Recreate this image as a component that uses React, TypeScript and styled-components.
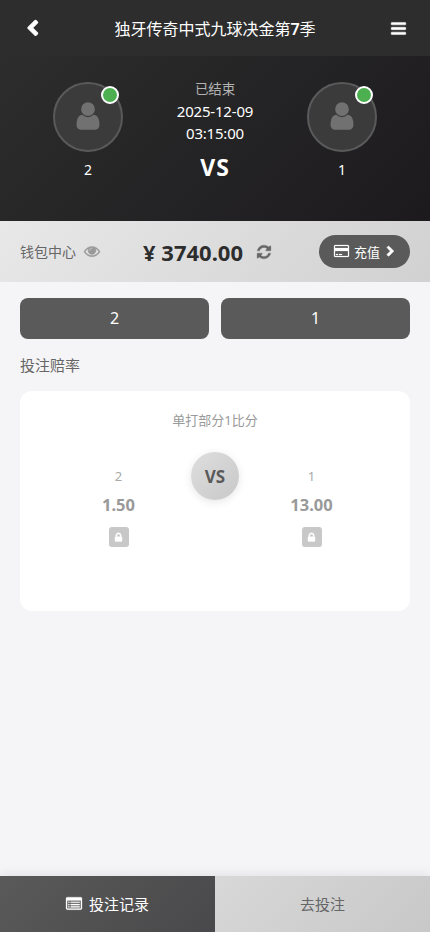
import React from "react";
import styled, { createGlobalStyle } from "styled-components";

const GlobalStyle = createGlobalStyle`
  * { box-sizing: border-box; }
  body {
    margin: 0;
    background: #f5f5f7;
    font-family: "Noto Sans", "Noto Sans CJK SC", sans-serif;
    color: #333;
  }
  button { font: inherit; border: 0; padding: 0; cursor: pointer; }
`;

const icons = {
  back: { w: 1792, d: "M1427 301l-531 531 531 531q19 19 19 45t-19 45l-166 166q-19 19-45 19t-45-19l-742-742q-19-19-19-45t19-45l742-742q19-19 45-19t45 19l166 166q19 19 19 45t-19 45z" },
  next: { w: 1792, d: "M1363 877l-742 742q-19 19-45 19t-45-19l-166-166q-19-19-19-45t19-45l531-531-531-531q-19-19-19-45t19-45l166-166q19-19 45-19t45 19l742 742q19 19 19 45t-19 45z" },
  menu: { w: 1792, d: "M1664 1344v128q0 26-19 45t-45 19h-1408q-26 0-45-19t-19-45v-128q0-26 19-45t45-19h1408q26 0 45 19t19 45zm0-512v128q0 26-19 45t-45 19h-1408q-26 0-45-19t-19-45v-128q0-26 19-45t45-19h1408q26 0 45 19t19 45zm0-512v128q0 26-19 45t-45 19h-1408q-26 0-45-19t-19-45v-128q0-26 19-45t45-19h1408q26 0 45 19t19 45z" },
  user: { w: 1792, d: "M1536 1399q0 109-62.5 187t-150.5 78h-854q-88 0-150.5-78t-62.5-187q0-85 8.5-160.5t31.5-152 58.5-131 94-89 134.5-34.5q131 128 313 128t313-128q76 0 134.5 34.5t94 89 58.5 131 31.5 152 8.5 160.5zm-256-887q0 159-112.5 271.5t-271.5 112.5-271.5-112.5-112.5-271.5 112.5-271.5 271.5-112.5 271.5 112.5 112.5 271.5z" },
  eye: { w: 1792, d: "M1664 960q-152-236-381-353 61 104 61 225 0 185-131.5 316.5t-316.5 131.5-316.5-131.5-131.5-316.5q0-121 61-225-229 117-381 353 133 205 333.5 326.5t434.5 121.5 434.5-121.5 333.5-326.5zm-720-384q0-20-14-34t-34-14q-125 0-214.5 89.5t-89.5 214.5q0 20 14 34t34 14 34-14 14-34q0-86 61-147t147-61q20 0 34-14t14-34zm848 384q0 34-20 69-140 230-376.5 368.5t-499.5 138.5-499.5-139-376.5-368q-20-35-20-69t20-69q140-229 376.5-368t499.5-139 499.5 139 376.5 368q20 35 20 69z" },
  refresh: { w: 1792, d: "M1639 1056q0 5-1 7-64 268-268 434.5t-478 166.5q-146 0-282.5-55t-243.5-157l-129 129q-19 19-45 19t-45-19-19-45v-448q0-26 19-45t45-19h448q26 0 45 19t19 45-19 45l-137 137q71 66 161 102t187 36q134 0 250-65t186-179q11-17 53-117 8-23 30-23h192q13 0 22.5 9.5t9.5 22.5zm25-800v448q0 26-19 45t-45 19h-448q-26 0-45-19t-19-45 19-45l138-138q-148-137-349-137-134 0-250 65t-186 179q-11 17-53 117-8 23-30 23h-199q-13 0-22.5-9.5t-9.5-22.5v-7q65-268 270-434.5t480-166.5q146 0 284 55.5t245 156.5l130-129q19-19 45-19t45 19 19 45z" },
  card: { w: 1920, d: "M1760 128q66 0 113 47t47 113v1216q0 66-47 113t-113 47h-1600q-66 0-113-47t-47-113v-1216q0-66 47-113t113-47h1600zm-1600 128q-13 0-22.5 9.5t-9.5 22.5v224h1664v-224q0-13-9.5-22.5t-22.5-9.5h-1600zm1600 1280q13 0 22.5-9.5t9.5-22.5v-608h-1664v608q0 13 9.5 22.5t22.5 9.5h1600zm-1504-128v-128h256v128h-256zm384 0v-128h384v128h-384z" },
  lock: { w: 1792, d: "M640 768h512v-192q0-106-75-181t-181-75-181 75-75 181v192zm832 96v576q0 40-28 68t-68 28h-960q-40 0-68-28t-28-68v-576q0-40 28-68t68-28h32v-192q0-184 132-316t316-132 316 132 132 316v192h32q40 0 68 28t28 68z" },
  list: { w: 1792, d: "M256 1152h128v128h-128zM256 896h128v128h-128zM256 640h128v128h-128zM512 1152h1024v128h-1024zM512 896h1024v128h-1024zM512 640h1024v128h-1024zM1664 1376v-832q0-13-9.5-22.5t-22.5-9.5h-1472q-13 0-22.5 9.5t-9.5 22.5v832q0 13 9.5 22.5t22.5 9.5h1472q13 0 22.5-9.5t9.5-22.5zm128-1088v1088q0 66-47 113t-113 47h-1472q-66 0-113-47t-47-113v-1088q0-66 47-113t113-47h1472q66 0 113 47t47 113z" },
};

const Glyph = styled.svg`
  display: block;
  flex: none;
  overflow: visible;
  fill: currentColor;
  stroke: currentColor;
`;

interface IconProps {
  name: keyof typeof icons;
  size: number;
  bold?: number;
}

function Icon({ name, size, bold = 0 }: IconProps) {
  const { w, d } = icons[name];
  return (
    <Glyph viewBox={`0 0 ${w} 1792`} width={(size * w) / 1792} height={size} strokeWidth={bold} aria-hidden="true">
      <path d={d} fillRule="evenodd" />
    </Glyph>
  );
}

const Page = styled.main`
  width: 100%;
  height: 932px;
  display: flex;
  flex-direction: column;
  background: #f5f5f7;
  overflow: hidden;
`;

const TopBar = styled.header`
  height: 56px;
  flex: none;
  display: flex;
  align-items: center;
  justify-content: space-between;
  padding: 0 23px;
  color: #fff;
  background: #2d2d2d;
`;

const BarButton = styled.button`
  width: 18px;
  height: 40px;
  display: flex;
  align-items: center;
  justify-content: center;
  color: #fff;
  background: none;
`;

const Title = styled.h1`
  margin: 2px 0 0;
  font-size: 16px;
  line-height: 24px;
  font-weight: 400;
`;

const Season = styled.b`
  font-weight: 600;
`;

const Hero = styled.section`
  height: 165px;
  flex: none;
  display: grid;
  grid-template-columns: 136px 1fr 136px;
  padding: 26px 20px 0;
  color: #fff;
  background: linear-gradient(135deg, #2d2d2d 0%, #1c1a1d 100%);
`;

const Player = styled.div`
  display: flex;
  flex-direction: column;
  align-items: center;
  font-size: 14px;
  line-height: 20px;
  gap: 8px;
`;

const Avatar = styled.div`
  position: relative;
  width: 70px;
  height: 70px;
  display: grid;
  place-items: center;
  padding-bottom: 2px;
  border: 2px solid #5a5a5b;
  border-radius: 50%;
  background: #3b3b3c;
  color: #717172;
`;

const Online = styled.i`
  position: absolute;
  top: 2px;
  right: 2px;
  width: 18px;
  height: 18px;
  border: 2px solid #fff;
  border-radius: 50%;
  background: #4caf50;
`;

const Match = styled.div`
  display: flex;
  flex-direction: column;
  align-items: center;
  font-size: 15px;
  line-height: 22px;
  letter-spacing: -0.2px;
  margin-top: -4px;
`;

const Status = styled.span`
  font-size: 13.5px;
  color: #b3b3b3;
`;

const HeroVersus = styled.strong`
  margin-top: 8px;
  font-size: 23px;
  line-height: 30px;
  letter-spacing: 1px;
`;

const Wallet = styled.section`
  height: 61px;
  flex: none;
  display: flex;
  align-items: center;
  justify-content: space-between;
  padding: 0 20px;
  background: linear-gradient(135deg, #e8e8e9 0%, #d2d1d2 100%);
`;

const WalletLabel = styled.div`
  display: flex;
  align-items: center;
  gap: 8px;
  margin-top: -1px;
  font-size: 14px;
  color: #666;
  svg { color: #999; }
`;

const Balance = styled.div`
  display: flex;
  align-items: center;
  gap: 13px;
  margin-right: 4px;
  font-size: 22px;
  line-height: 30px;
  font-weight: 700;
  color: #2d2d2d;
  svg { color: #666; }
`;

const Recharge = styled.button`
  width: 91px;
  height: 33px;
  display: flex;
  align-items: center;
  justify-content: center;
  gap: 5px;
  margin-top: -1px;
  padding-left: 1px;
  border-radius: 17px;
  font-size: 13px;
  color: #fff;
  background: #5a5a5a;
`;

const Content = styled.div`
  flex: 1;
  display: flex;
  flex-direction: column;
  padding: 16px 20px 0;
`;

const Tabs = styled.div`
  display: grid;
  grid-template-columns: 1fr 1fr;
  gap: 12px;
`;

const Tab = styled.button`
  height: 41px;
  padding-bottom: 1px;
  border-radius: 8px;
  font-size: 16px;
  color: #fff;
  background: #5a5a5a;
`;

const SectionTitle = styled.h2`
  margin: 15px 0 14px;
  font-size: 15px;
  line-height: 23px;
  font-weight: 400;
  color: #666;
`;

const OddsCard = styled.section`
  height: 220px;
  padding: 18px 20px;
  border-radius: 12px;
  background: #fff;
`;

const OddsTitle = styled.h3`
  margin: 0;
  text-align: center;
  font-size: 13px;
  line-height: 22px;
  font-weight: 400;
  color: #999;
`;

const OddsRow = styled.div`
  display: grid;
  grid-template-columns: 1fr 48px 1fr;
  gap: 6px;
  margin-top: 21px;
`;

const Odds = styled.button<{ $side: "left" | "right" }>`
  display: flex;
  flex-direction: column;
  align-items: center;
  padding: ${(p) => (p.$side === "left" ? "14px 0 0 12px" : "14px 12px 0 0")};
  background: none;
  color: #999;
`;

const OddsName = styled.span`
  font-size: 13px;
  line-height: 20px;
  color: #aaa;
`;

const OddsValue = styled.strong`
  margin-top: 7px;
  font-size: 16.5px;
  line-height: 24px;
`;

const LockBadge = styled.span`
  width: 20px;
  height: 20px;
  margin-top: 10px;
  display: grid;
  place-items: center;
  border-radius: 3px;
  color: #fff;
  background: #c8c8c8;
`;

const VersusDisc = styled.div`
  width: 48px;
  height: 48px;
  display: grid;
  place-items: center;
  padding-top: 1px;
  border-radius: 50%;
  font-size: 17px;
  font-weight: 700;
  color: #5a5a5a;
  background: linear-gradient(135deg, #dededf, #c8c8c9);
  box-shadow: 0 2px 8px rgba(0, 0, 0, 0.1);
`;

const Footer = styled.nav`
  height: 56px;
  flex: none;
  display: grid;
  grid-template-columns: 1fr 1fr;
  box-shadow: 0 -2px 10px rgba(0, 0, 0, 0.08);
`;

const FooterButton = styled.button<{ $primary?: boolean }>`
  display: flex;
  align-items: center;
  justify-content: center;
  gap: 7px;
  padding-bottom: 1px;
  font-size: 15px;
  color: ${(p) => (p.$primary ? "#fff" : "#666")};
  background: ${(p) =>
    p.$primary
      ? "linear-gradient(135deg, #5a5a5a, #49484a)"
      : "linear-gradient(135deg, #d8d8d9, #c8c8c9)"};
`;

const odds = [
  { name: "2", value: "1.50", side: "left" as const },
  { name: "1", value: "13.00", side: "right" as const },
];

function Contestant({ name }: { name: string }) {
  return (
    <Player>
      <Avatar>
        <Icon name="user" size={32} />
        <Online />
      </Avatar>
      {name}
    </Player>
  );
}

function OddsOption({ option }: { option: (typeof odds)[number] }) {
  return (
    <Odds $side={option.side}>
      <OddsName>{option.name}</OddsName>
      <OddsValue>{option.value}</OddsValue>
      <LockBadge>
        <Icon name="lock" size={11} bold={60} />
      </LockBadge>
    </Odds>
  );
}

export default function App() {
  return (
    <>
      <GlobalStyle />
      <Page lang="zh-CN">
        <TopBar>
          <BarButton aria-label="返回"><Icon name="back" size={17} bold={110} /></BarButton>
          <Title>独牙传奇中式九球决金第<Season>7</Season>季</Title>
          <BarButton aria-label="菜单"><Icon name="menu" size={17} bold={50} /></BarButton>
        </TopBar>
        <Hero>
          <Contestant name="2" />
          <Match>
            <Status>已结束</Status>
            <span>2025-12-09</span>
            <span>03:15:00</span>
            <HeroVersus>VS</HeroVersus>
          </Match>
          <Contestant name="1" />
        </Hero>
        <Wallet>
          <WalletLabel>钱包中心<Icon name="eye" size={16} bold={40} /></WalletLabel>
          <Balance>¥ 3740.00<Icon name="refresh" size={16} bold={40} /></Balance>
          <Recharge><Icon name="card" size={14} bold={30} />充值<Icon name="next" size={11} bold={130} /></Recharge>
        </Wallet>
        <Content>
          <Tabs>
            <Tab>2</Tab>
            <Tab>1</Tab>
          </Tabs>
          <SectionTitle>投注赔率</SectionTitle>
          <OddsCard>
            <OddsTitle>单打部分1比分</OddsTitle>
            <OddsRow>
              <OddsOption option={odds[0]} />
              <VersusDisc>VS</VersusDisc>
              <OddsOption option={odds[1]} />
            </OddsRow>
          </OddsCard>
        </Content>
        <Footer>
          <FooterButton $primary><Icon name="list" size={16} bold={30} />投注记录</FooterButton>
          <FooterButton>去投注</FooterButton>
        </Footer>
      </Page>
    </>
  );
}
